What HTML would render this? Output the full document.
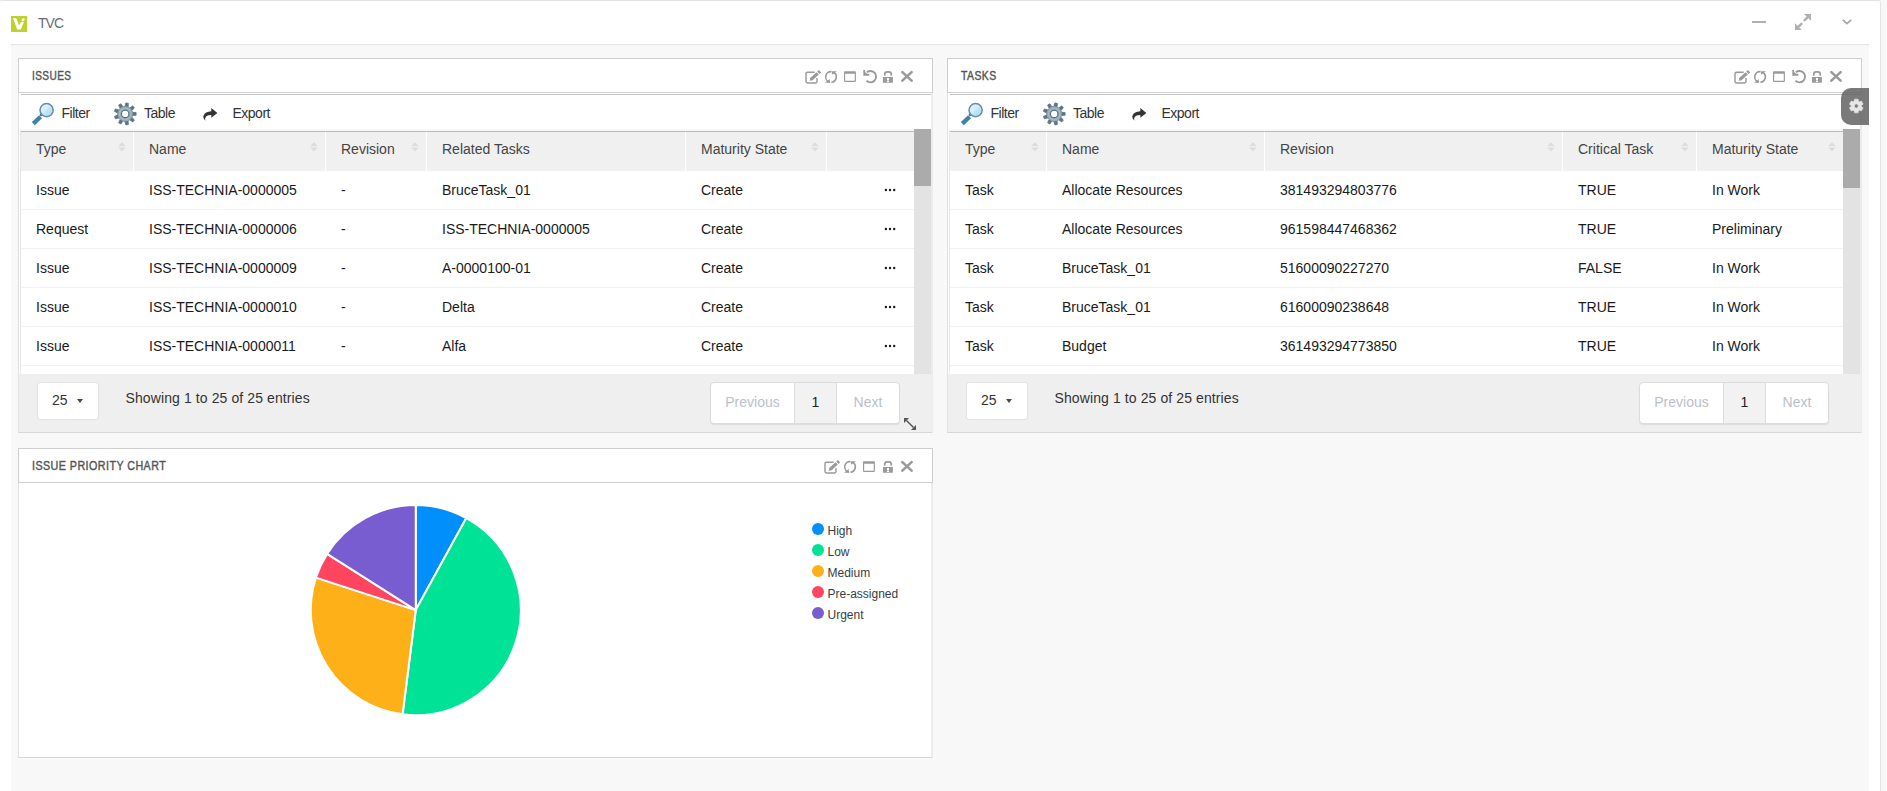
<!DOCTYPE html>
<html><head><meta charset="utf-8">
<style>
*{box-sizing:border-box;margin:0;padding:0}
html,body{width:1887px;height:791px;overflow:hidden}
body{background:#f8f8f8;font-family:"Liberation Sans",sans-serif;position:relative;color:#222}
.abs{position:absolute}
.frame{position:absolute;left:0;top:0;width:1881px;height:800px;background:#fff;border-top:1px solid #e0e2e2;border-right:1px solid #e4e6e6;border-top-right-radius:3px;border-top-left-radius:2px}
.logo{left:11px;top:16px;width:16px;height:16px;background:#bfd12e}
.ttl{left:38px;top:14px;font-size:14px;line-height:18px;color:#6a6d72;letter-spacing:-0.95px}
.sep{left:11px;top:44px;width:1858px;height:1px;background:#e4e4e4}
.content{left:11px;top:45px;width:1858px;height:760px;background:#f8f8f8}
/* widget */
.wh{height:35px;width:915px;border:1px solid #cfcfcf;background:#fff}
.wt{position:absolute;left:13px;top:10px;font-size:12px;line-height:14px;font-weight:normal;-webkit-text-stroke:0.4px #555;color:#555;letter-spacing:0.5px;transform-origin:0 0}
.wb{width:915px;background:#fff;border-left:1px solid #e2e2e2;border-right:2px solid #ececec;border-bottom:1px solid #d8d8d8}
.tbarline{height:1px;background:#c0c2c4}
.tb{font-size:14px;color:#333;line-height:16px;letter-spacing:-0.5px}
.th{background:#f0f0f0;height:38px;border-top:1px solid #b9bbbd}
.row{height:39px;border-bottom:1px solid #f0f0f0;background:#fff}
.cell{position:absolute;top:0;font-size:14px;white-space:nowrap}
.th .cell{line-height:36px;color:#444}
.row .cell{line-height:40px;color:#1a1a1a}
.div{position:absolute;top:-3px;width:1px;height:41px;background:#fff}
.sort{position:absolute;top:10px;width:8px;height:10px}
.foot{background:#efefef}
.sel{width:62px;height:38px;background:#fff;border:1px solid #e2e2e2;border-radius:3px}
.sel span{position:absolute;left:14px;top:9px;font-size:14px;line-height:16px;color:#333}
.caret{position:absolute;left:39px;top:16px;width:0;height:0;border-left:3.5px solid transparent;border-right:3.5px solid transparent;border-top:4px solid #4a4a4a}
.info{font-size:14px;line-height:16px;color:#333;letter-spacing:0.1px}
.pag{height:42px;background:#fff;border:1px solid #dcdcdc;border-radius:4px;box-shadow:0 1px 1px rgba(0,0,0,0.08)}
.pag div{position:absolute;top:0;height:40px;font-size:14px;line-height:38px;color:#bcc0c8;text-align:center}
.scr{background:#e3e3e3}
.thumb{background:#ababab}
.ic{position:absolute;fill:#9a9a9a}
</style></head><body>
<div class="frame"></div>
<div class="abs logo"><svg width="16" height="16" viewBox="0 0 16 16"><path d="M2.1 2.3 L5.3 2.3 L8 9.3 L10.1 5.9 L12.9 5.9 L9.8 13.5 L6.2 13.5 Z" fill="#fff"/><ellipse cx="12.1" cy="3.7" rx="1.8" ry="1.25" transform="rotate(-35 12.1 3.7)" fill="#fff"/></svg></div>
<div class="abs ttl">TVC</div>
<div class="abs sep"></div>
<div class="abs content"></div>

<!-- top right icons -->
<div class="abs" style="left:1752px;top:21px;width:14px;height:2px;background:#aeb0b4"></div>
<svg class="abs" style="left:1795px;top:14px" width="16" height="16" viewBox="0 0 16 16"><g fill="#aeb0b4"><path d="M9.1 0 L16 0 L16 6.8 Z"/><path d="M0 9.2 L0 16 L6.8 16 Z"/></g><g stroke="#aeb0b4" stroke-width="2.4" stroke-linecap="round"><path d="M9.6 6.2 L13 2.8"/><path d="M6.4 9.8 L3 13.2"/></g></svg>
<svg class="abs" style="left:1842px;top:19px" width="10" height="6" viewBox="0 0 10 6"><path d="M0.8 0.8 L5 4.6 L9.2 0.8" stroke="#a4a7ab" stroke-width="1.8" fill="none"/></svg>

<div class="abs wh" style="left:18px;top:58px"><div class="wt" style="left:13.2px;transform:scaleX(0.84)">ISSUES</div></div><svg class="abs" style="left:900px;top:66px" width="14" height="18" viewBox="0 0 14 18"><path d="M2.35 6.1 L11.6 14.6 M11.6 6.1 L2.35 14.6" stroke="#9a9a9a" stroke-width="2.6" stroke-linecap="round"/></svg><svg class="abs" style="left:882px;top:66px" width="12" height="18" viewBox="0 0 12 18"><path d="M2.7 9.7 V8.4 Q2.7 5.8 5.3 5.8 H6.7 Q9.3 5.8 9.3 8.4 V9.7" fill="none" stroke="#9a9a9a" stroke-width="1.7"/><path d="M0.95 11.1 H10.9 V16.7 H0.95 Z M5 12 V14.4 H7 V12 Z M5 14.9 V15.9 H7 V14.9 Z" fill="#9a9a9a" fill-rule="evenodd"/></svg><svg class="abs" style="left:862px;top:66px" width="16" height="18" viewBox="0 0 16 18"><path d="M4.8 6.2 A5.7 5.7 0 1 1 4.5 14.8" fill="none" stroke="#9a9a9a" stroke-width="1.9"/><path d="M1.3 4.05 H3.1 V5.9 L5.1 7.85 H7.4 V9.75 H1.3 Z" fill="#9a9a9a"/></svg><svg class="abs" style="left:843px;top:70px" width="14" height="13" viewBox="0 0 14 13"><path d="M1.8 1.2 H12.1 Q12.9 1.2 12.9 2 V11.1 Q12.9 11.9 12.1 11.9 H1.8 Q1 11.9 1 11.1 V2 Q1 1.2 1.8 1.2 Z M2.15 3.7 V10.75 H11.75 V3.7 Z" fill="#9a9a9a" fill-rule="evenodd"/></svg><svg class="abs" style="left:824px;top:70px" width="14" height="14" viewBox="0 0 14 14"><g fill="none" stroke="#9a9a9a" stroke-width="1.6"><path d="M7.55 1.63 A5.3 5.3 0 0 0 6.08 12.12"/><path d="M9.49 2.22 A5.3 5.3 0 0 1 7.37 12.19"/></g><g fill="#9a9a9a"><path d="M1.0 12.7 L5.75 12.7 L5.75 9.0 Z"/><path d="M7.95 1.15 L13 1.15 L7.95 4.65 Z"/></g></svg><svg class="abs" style="left:804px;top:66px" width="20" height="20" viewBox="0 0 20 20"><path d="M10.7 6.3 H3.4 Q2 6.3 2 7.7 V15.5 Q2 16.9 3.4 16.9 H11.6 Q13 16.9 13 15.5 V12.1" fill="none" stroke="#9a9a9a" stroke-width="1.45"/><path d="M5.6 14.8 L6.39 11.83 L12.57 6.13 L14.81 8.55 L8.63 14.25 Z" fill="#9a9a9a"/><path d="M13.23 5.52 L14.88 3.99 L17.12 6.41 L15.47 7.94 Z" fill="#9a9a9a"/></svg><div class="abs wb" style="left:18px;top:93px;height:340px"></div><div class="abs tbarline" style="left:21px;top:94px;width:910px"></div><svg class="abs" style="left:28px;top:98px" width="30" height="30" viewBox="0 0 30 30"><defs><linearGradient id="lg28" x1="0" y1="0" x2="1" y2="1"><stop offset="0" stop-color="#e3f3fb"/><stop offset="0.5" stop-color="#d0ecf9"/><stop offset="0.52" stop-color="#bfe4f7"/><stop offset="1" stop-color="#aedcf5"/></linearGradient></defs><path d="M12.2 17.6 L13.8 16.2" stroke="#4b6675" stroke-width="2.2"/><path d="M5.3 25.6 L12.6 18.8" stroke="#3d83a8" stroke-width="4.3"/><circle cx="18.6" cy="12.1" r="6.6" fill="url(#lg28)" stroke="#668ea3" stroke-width="1.5"/></svg><div class="abs tb" style="left:61.5px;top:105px">Filter</div><svg class="abs" style="left:110px;top:98px" width="30" height="30" viewBox="0 0 30 30"><path d="M14.86 8.51 L15.80 4.92 L18.39 5.37 L18.04 9.07 L19.69 10.02 L22.72 7.87 L24.41 9.89 L21.77 12.50 L22.42 14.29 L26.12 14.58 L26.12 17.22 L22.42 17.51 L21.77 19.30 L24.41 21.91 L22.72 23.93 L19.69 21.78 L18.04 22.73 L18.39 26.43 L15.80 26.88 L14.86 23.29 L12.99 22.96 L10.88 26.02 L8.60 24.70 L10.19 21.35 L8.97 19.89 L5.39 20.87 L4.49 18.40 L7.86 16.85 L7.86 14.95 L4.49 13.40 L5.39 10.93 L8.97 11.91 L10.19 10.45 L8.60 7.10 L10.88 5.78 L12.99 8.84 Z" fill="#5a7686" stroke="#5a7686" stroke-width="0.8" stroke-linejoin="round"/><circle cx="15.2" cy="15.9" r="7.6" fill="#8fa4b0"/><circle cx="15.2" cy="15.9" r="5.7" fill="none" stroke="#a6b8c2" stroke-width="1.6"/><circle cx="15.2" cy="15.9" r="3.7" fill="#fff" stroke="#54707f" stroke-width="1.1"/></svg><div class="abs tb" style="left:144px;top:105px">Table</div><svg class="abs" style="left:203px;top:108px" width="15" height="13" viewBox="0 0 15 13"><path d="M8.3 0 L14.4 4.9 L8.3 9.8 V7 Q3.2 6.9 2.2 10.3 Q1.8 11.6 2.8 12.7 Q-0.6 10.8 0.6 7.4 Q2 3.6 8.3 3.2 Z" fill="#333"/></svg><div class="abs tb" style="left:232.5px;top:105px">Export</div><div class="abs" style="left:20px;top:131px;width:894px;height:243px;background:#fff;overflow:hidden"><div class="abs th" style="left:0;top:0;width:894px;height:40px"></div><div class="cell" style="left:16px;top:0px;line-height:36px;color:#444">Type</div><div class="cell" style="left:129px;top:0px;line-height:36px;color:#444">Name</div><div class="abs" style="left:113px;top:1px;width:1px;height:39px;background:#fff"></div><div class="cell" style="left:321px;top:0px;line-height:36px;color:#444">Revision</div><div class="abs" style="left:305px;top:1px;width:1px;height:39px;background:#fff"></div><div class="cell" style="left:422px;top:0px;line-height:36px;color:#444">Related Tasks</div><div class="abs" style="left:406px;top:1px;width:1px;height:39px;background:#fff"></div><div class="cell" style="left:681px;top:0px;line-height:36px;color:#444">Maturity State</div><div class="abs" style="left:665px;top:1px;width:1px;height:39px;background:#fff"></div><div class="abs" style="left:806px;top:1px;width:1px;height:39px;background:#fff"></div><svg class="abs" style="left:98px;top:11px" width="8" height="10" viewBox="0 0 8 10"><path d="M3.9 0.2 L7.6 4.0 H0.2 Z M3.9 9.4 L7.6 5.4 H0.2 Z" fill="#dcdcdc"/></svg><svg class="abs" style="left:290px;top:11px" width="8" height="10" viewBox="0 0 8 10"><path d="M3.9 0.2 L7.6 4.0 H0.2 Z M3.9 9.4 L7.6 5.4 H0.2 Z" fill="#dcdcdc"/></svg><svg class="abs" style="left:391px;top:11px" width="8" height="10" viewBox="0 0 8 10"><path d="M3.9 0.2 L7.6 4.0 H0.2 Z M3.9 9.4 L7.6 5.4 H0.2 Z" fill="#dcdcdc"/></svg><svg class="abs" style="left:791px;top:11px" width="8" height="10" viewBox="0 0 8 10"><path d="M3.9 0.2 L7.6 4.0 H0.2 Z M3.9 9.4 L7.6 5.4 H0.2 Z" fill="#dcdcdc"/></svg><div class="abs" style="left:0;top:78px;width:894px;height:1px;background:#f1f1f1"></div><div class="cell" style="left:16px;top:40px;line-height:38px;color:#1a1a1a">Issue</div><div class="cell" style="left:129px;top:40px;line-height:38px;color:#1a1a1a">ISS-TECHNIA-0000005</div><div class="cell" style="left:321px;top:40px;line-height:38px;color:#1a1a1a">-</div><div class="cell" style="left:422px;top:40px;line-height:38px;color:#1a1a1a">BruceTask_01</div><div class="cell" style="left:681px;top:40px;line-height:38px;color:#1a1a1a">Create</div><svg class="abs" style="left:864px;top:56.8px" width="12" height="4" viewBox="0 0 12 4"><g fill="#1a1a1a"><circle cx="1.9" cy="2" r="1.2"/><circle cx="6" cy="2" r="1.2"/><circle cx="10.2" cy="2" r="1.2"/></g></svg><div class="abs" style="left:0;top:117px;width:894px;height:1px;background:#f1f1f1"></div><div class="cell" style="left:16px;top:79px;line-height:38px;color:#1a1a1a">Request</div><div class="cell" style="left:129px;top:79px;line-height:38px;color:#1a1a1a">ISS-TECHNIA-0000006</div><div class="cell" style="left:321px;top:79px;line-height:38px;color:#1a1a1a">-</div><div class="cell" style="left:422px;top:79px;line-height:38px;color:#1a1a1a">ISS-TECHNIA-0000005</div><div class="cell" style="left:681px;top:79px;line-height:38px;color:#1a1a1a">Create</div><svg class="abs" style="left:864px;top:95.8px" width="12" height="4" viewBox="0 0 12 4"><g fill="#1a1a1a"><circle cx="1.9" cy="2" r="1.2"/><circle cx="6" cy="2" r="1.2"/><circle cx="10.2" cy="2" r="1.2"/></g></svg><div class="abs" style="left:0;top:156px;width:894px;height:1px;background:#f1f1f1"></div><div class="cell" style="left:16px;top:118px;line-height:38px;color:#1a1a1a">Issue</div><div class="cell" style="left:129px;top:118px;line-height:38px;color:#1a1a1a">ISS-TECHNIA-0000009</div><div class="cell" style="left:321px;top:118px;line-height:38px;color:#1a1a1a">-</div><div class="cell" style="left:422px;top:118px;line-height:38px;color:#1a1a1a">A-0000100-01</div><div class="cell" style="left:681px;top:118px;line-height:38px;color:#1a1a1a">Create</div><svg class="abs" style="left:864px;top:134.8px" width="12" height="4" viewBox="0 0 12 4"><g fill="#1a1a1a"><circle cx="1.9" cy="2" r="1.2"/><circle cx="6" cy="2" r="1.2"/><circle cx="10.2" cy="2" r="1.2"/></g></svg><div class="abs" style="left:0;top:195px;width:894px;height:1px;background:#f1f1f1"></div><div class="cell" style="left:16px;top:157px;line-height:38px;color:#1a1a1a">Issue</div><div class="cell" style="left:129px;top:157px;line-height:38px;color:#1a1a1a">ISS-TECHNIA-0000010</div><div class="cell" style="left:321px;top:157px;line-height:38px;color:#1a1a1a">-</div><div class="cell" style="left:422px;top:157px;line-height:38px;color:#1a1a1a">Delta</div><div class="cell" style="left:681px;top:157px;line-height:38px;color:#1a1a1a">Create</div><svg class="abs" style="left:864px;top:173.8px" width="12" height="4" viewBox="0 0 12 4"><g fill="#1a1a1a"><circle cx="1.9" cy="2" r="1.2"/><circle cx="6" cy="2" r="1.2"/><circle cx="10.2" cy="2" r="1.2"/></g></svg><div class="abs" style="left:0;top:234px;width:894px;height:1px;background:#f1f1f1"></div><div class="cell" style="left:16px;top:196px;line-height:38px;color:#1a1a1a">Issue</div><div class="cell" style="left:129px;top:196px;line-height:38px;color:#1a1a1a">ISS-TECHNIA-0000011</div><div class="cell" style="left:321px;top:196px;line-height:38px;color:#1a1a1a">-</div><div class="cell" style="left:422px;top:196px;line-height:38px;color:#1a1a1a">Alfa</div><div class="cell" style="left:681px;top:196px;line-height:38px;color:#1a1a1a">Create</div><svg class="abs" style="left:864px;top:212.8px" width="12" height="4" viewBox="0 0 12 4"><g fill="#1a1a1a"><circle cx="1.9" cy="2" r="1.2"/><circle cx="6" cy="2" r="1.2"/><circle cx="10.2" cy="2" r="1.2"/></g></svg></div><div class="abs" style="left:20px;top:129px;width:894px;height:2px;background:linear-gradient(#fbfbfc,#f1f2f3)"></div><div class="abs" style="left:826px;top:129px;width:1px;height:2px;background:#fff"></div><div class="abs" style="left:133px;top:129px;width:1px;height:2px;background:#fff"></div><div class="abs" style="left:325px;top:129px;width:1px;height:2px;background:#fff"></div><div class="abs" style="left:426px;top:129px;width:1px;height:2px;background:#fff"></div><div class="abs" style="left:685px;top:129px;width:1px;height:2px;background:#fff"></div><div class="abs scr" style="left:914px;top:129px;width:17px;height:245px"></div><div class="abs thumb" style="left:914px;top:129px;width:17px;height:57px"></div><div class="abs" style="left:20px;top:131px;width:1px;height:243px;background:#e8e8e8"></div><div class="abs foot" style="left:19px;top:374px;width:913px;height:58px"></div><div class="abs sel" style="left:37px;top:382px"><span>25</span><div class="caret"></div></div><div class="abs info" style="left:125.5px;top:390px">Showing 1 to 25 of 25 entries</div><div class="abs pag" style="left:710px;top:382px;width:190px"><div style="left:0;width:83px">Previous</div><div style="left:83px;width:43px;background:#f2f2f2;border-left:1px solid #dcdcdc;border-right:1px solid #dcdcdc;color:#222">1</div><div style="left:126px;width:62px">Next</div></div><svg class="abs" style="left:904px;top:418px" width="12" height="12" viewBox="0 0 12 12"><g fill="#555"><path d="M0 0 H5 L0 5 Z"/><path d="M12 12 H7 L12 7 Z"/><path d="M2 3 L3 2 L10 9 L9 10 Z"/></g></svg><div class="abs wh" style="left:947px;top:58px"><div class="wt" style="left:13.2px;transform:scaleX(0.87)">TASKS</div></div><svg class="abs" style="left:1829px;top:66px" width="14" height="18" viewBox="0 0 14 18"><path d="M2.35 6.1 L11.6 14.6 M11.6 6.1 L2.35 14.6" stroke="#9a9a9a" stroke-width="2.6" stroke-linecap="round"/></svg><svg class="abs" style="left:1811px;top:66px" width="12" height="18" viewBox="0 0 12 18"><path d="M2.7 9.7 V8.4 Q2.7 5.8 5.3 5.8 H6.7 Q9.3 5.8 9.3 8.4 V9.7" fill="none" stroke="#9a9a9a" stroke-width="1.7"/><path d="M0.95 11.1 H10.9 V16.7 H0.95 Z M5 12 V14.4 H7 V12 Z M5 14.9 V15.9 H7 V14.9 Z" fill="#9a9a9a" fill-rule="evenodd"/></svg><svg class="abs" style="left:1791px;top:66px" width="16" height="18" viewBox="0 0 16 18"><path d="M4.8 6.2 A5.7 5.7 0 1 1 4.5 14.8" fill="none" stroke="#9a9a9a" stroke-width="1.9"/><path d="M1.3 4.05 H3.1 V5.9 L5.1 7.85 H7.4 V9.75 H1.3 Z" fill="#9a9a9a"/></svg><svg class="abs" style="left:1772px;top:70px" width="14" height="13" viewBox="0 0 14 13"><path d="M1.8 1.2 H12.1 Q12.9 1.2 12.9 2 V11.1 Q12.9 11.9 12.1 11.9 H1.8 Q1 11.9 1 11.1 V2 Q1 1.2 1.8 1.2 Z M2.15 3.7 V10.75 H11.75 V3.7 Z" fill="#9a9a9a" fill-rule="evenodd"/></svg><svg class="abs" style="left:1753px;top:70px" width="14" height="14" viewBox="0 0 14 14"><g fill="none" stroke="#9a9a9a" stroke-width="1.6"><path d="M7.55 1.63 A5.3 5.3 0 0 0 6.08 12.12"/><path d="M9.49 2.22 A5.3 5.3 0 0 1 7.37 12.19"/></g><g fill="#9a9a9a"><path d="M1.0 12.7 L5.75 12.7 L5.75 9.0 Z"/><path d="M7.95 1.15 L13 1.15 L7.95 4.65 Z"/></g></svg><svg class="abs" style="left:1733px;top:66px" width="20" height="20" viewBox="0 0 20 20"><path d="M10.7 6.3 H3.4 Q2 6.3 2 7.7 V15.5 Q2 16.9 3.4 16.9 H11.6 Q13 16.9 13 15.5 V12.1" fill="none" stroke="#9a9a9a" stroke-width="1.45"/><path d="M5.6 14.8 L6.39 11.83 L12.57 6.13 L14.81 8.55 L8.63 14.25 Z" fill="#9a9a9a"/><path d="M13.23 5.52 L14.88 3.99 L17.12 6.41 L15.47 7.94 Z" fill="#9a9a9a"/></svg><div class="abs wb" style="left:947px;top:93px;height:340px"></div><div class="abs tbarline" style="left:950px;top:94px;width:910px"></div><svg class="abs" style="left:957px;top:98px" width="30" height="30" viewBox="0 0 30 30"><defs><linearGradient id="lg957" x1="0" y1="0" x2="1" y2="1"><stop offset="0" stop-color="#e3f3fb"/><stop offset="0.5" stop-color="#d0ecf9"/><stop offset="0.52" stop-color="#bfe4f7"/><stop offset="1" stop-color="#aedcf5"/></linearGradient></defs><path d="M12.2 17.6 L13.8 16.2" stroke="#4b6675" stroke-width="2.2"/><path d="M5.3 25.6 L12.6 18.8" stroke="#3d83a8" stroke-width="4.3"/><circle cx="18.6" cy="12.1" r="6.6" fill="url(#lg957)" stroke="#668ea3" stroke-width="1.5"/></svg><div class="abs tb" style="left:990.5px;top:105px">Filter</div><svg class="abs" style="left:1039px;top:98px" width="30" height="30" viewBox="0 0 30 30"><path d="M14.86 8.51 L15.80 4.92 L18.39 5.37 L18.04 9.07 L19.69 10.02 L22.72 7.87 L24.41 9.89 L21.77 12.50 L22.42 14.29 L26.12 14.58 L26.12 17.22 L22.42 17.51 L21.77 19.30 L24.41 21.91 L22.72 23.93 L19.69 21.78 L18.04 22.73 L18.39 26.43 L15.80 26.88 L14.86 23.29 L12.99 22.96 L10.88 26.02 L8.60 24.70 L10.19 21.35 L8.97 19.89 L5.39 20.87 L4.49 18.40 L7.86 16.85 L7.86 14.95 L4.49 13.40 L5.39 10.93 L8.97 11.91 L10.19 10.45 L8.60 7.10 L10.88 5.78 L12.99 8.84 Z" fill="#5a7686" stroke="#5a7686" stroke-width="0.8" stroke-linejoin="round"/><circle cx="15.2" cy="15.9" r="7.6" fill="#8fa4b0"/><circle cx="15.2" cy="15.9" r="5.7" fill="none" stroke="#a6b8c2" stroke-width="1.6"/><circle cx="15.2" cy="15.9" r="3.7" fill="#fff" stroke="#54707f" stroke-width="1.1"/></svg><div class="abs tb" style="left:1073px;top:105px">Table</div><svg class="abs" style="left:1132px;top:108px" width="15" height="13" viewBox="0 0 15 13"><path d="M8.3 0 L14.4 4.9 L8.3 9.8 V7 Q3.2 6.9 2.2 10.3 Q1.8 11.6 2.8 12.7 Q-0.6 10.8 0.6 7.4 Q2 3.6 8.3 3.2 Z" fill="#333"/></svg><div class="abs tb" style="left:1161.5px;top:105px">Export</div><div class="abs" style="left:949px;top:131px;width:894px;height:243px;background:#fff;overflow:hidden"><div class="abs th" style="left:0;top:0;width:894px;height:40px"></div><div class="cell" style="left:16px;top:0px;line-height:36px;color:#444">Type</div><div class="cell" style="left:113px;top:0px;line-height:36px;color:#444">Name</div><div class="abs" style="left:97px;top:1px;width:1px;height:39px;background:#fff"></div><div class="cell" style="left:331px;top:0px;line-height:36px;color:#444">Revision</div><div class="abs" style="left:315px;top:1px;width:1px;height:39px;background:#fff"></div><div class="cell" style="left:629px;top:0px;line-height:36px;color:#444">Critical Task</div><div class="abs" style="left:613px;top:1px;width:1px;height:39px;background:#fff"></div><div class="cell" style="left:763px;top:0px;line-height:36px;color:#444">Maturity State</div><div class="abs" style="left:747px;top:1px;width:1px;height:39px;background:#fff"></div><svg class="abs" style="left:82px;top:11px" width="8" height="10" viewBox="0 0 8 10"><path d="M3.9 0.2 L7.6 4.0 H0.2 Z M3.9 9.4 L7.6 5.4 H0.2 Z" fill="#dcdcdc"/></svg><svg class="abs" style="left:300px;top:11px" width="8" height="10" viewBox="0 0 8 10"><path d="M3.9 0.2 L7.6 4.0 H0.2 Z M3.9 9.4 L7.6 5.4 H0.2 Z" fill="#dcdcdc"/></svg><svg class="abs" style="left:598px;top:11px" width="8" height="10" viewBox="0 0 8 10"><path d="M3.9 0.2 L7.6 4.0 H0.2 Z M3.9 9.4 L7.6 5.4 H0.2 Z" fill="#dcdcdc"/></svg><svg class="abs" style="left:732px;top:11px" width="8" height="10" viewBox="0 0 8 10"><path d="M3.9 0.2 L7.6 4.0 H0.2 Z M3.9 9.4 L7.6 5.4 H0.2 Z" fill="#dcdcdc"/></svg><svg class="abs" style="left:879px;top:11px" width="8" height="10" viewBox="0 0 8 10"><path d="M3.9 0.2 L7.6 4.0 H0.2 Z M3.9 9.4 L7.6 5.4 H0.2 Z" fill="#dcdcdc"/></svg><div class="abs" style="left:0;top:78px;width:894px;height:1px;background:#f1f1f1"></div><div class="cell" style="left:16px;top:40px;line-height:38px;color:#1a1a1a">Task</div><div class="cell" style="left:113px;top:40px;line-height:38px;color:#1a1a1a">Allocate Resources</div><div class="cell" style="left:331px;top:40px;line-height:38px;color:#1a1a1a">381493294803776</div><div class="cell" style="left:629px;top:40px;line-height:38px;color:#1a1a1a">TRUE</div><div class="cell" style="left:763px;top:40px;line-height:38px;color:#1a1a1a">In Work</div><div class="abs" style="left:0;top:117px;width:894px;height:1px;background:#f1f1f1"></div><div class="cell" style="left:16px;top:79px;line-height:38px;color:#1a1a1a">Task</div><div class="cell" style="left:113px;top:79px;line-height:38px;color:#1a1a1a">Allocate Resources</div><div class="cell" style="left:331px;top:79px;line-height:38px;color:#1a1a1a">961598447468362</div><div class="cell" style="left:629px;top:79px;line-height:38px;color:#1a1a1a">TRUE</div><div class="cell" style="left:763px;top:79px;line-height:38px;color:#1a1a1a">Preliminary</div><div class="abs" style="left:0;top:156px;width:894px;height:1px;background:#f1f1f1"></div><div class="cell" style="left:16px;top:118px;line-height:38px;color:#1a1a1a">Task</div><div class="cell" style="left:113px;top:118px;line-height:38px;color:#1a1a1a">BruceTask_01</div><div class="cell" style="left:331px;top:118px;line-height:38px;color:#1a1a1a">51600090227270</div><div class="cell" style="left:629px;top:118px;line-height:38px;color:#1a1a1a">FALSE</div><div class="cell" style="left:763px;top:118px;line-height:38px;color:#1a1a1a">In Work</div><div class="abs" style="left:0;top:195px;width:894px;height:1px;background:#f1f1f1"></div><div class="cell" style="left:16px;top:157px;line-height:38px;color:#1a1a1a">Task</div><div class="cell" style="left:113px;top:157px;line-height:38px;color:#1a1a1a">BruceTask_01</div><div class="cell" style="left:331px;top:157px;line-height:38px;color:#1a1a1a">61600090238648</div><div class="cell" style="left:629px;top:157px;line-height:38px;color:#1a1a1a">TRUE</div><div class="cell" style="left:763px;top:157px;line-height:38px;color:#1a1a1a">In Work</div><div class="abs" style="left:0;top:234px;width:894px;height:1px;background:#f1f1f1"></div><div class="cell" style="left:16px;top:196px;line-height:38px;color:#1a1a1a">Task</div><div class="cell" style="left:113px;top:196px;line-height:38px;color:#1a1a1a">Budget</div><div class="cell" style="left:331px;top:196px;line-height:38px;color:#1a1a1a">361493294773850</div><div class="cell" style="left:629px;top:196px;line-height:38px;color:#1a1a1a">TRUE</div><div class="cell" style="left:763px;top:196px;line-height:38px;color:#1a1a1a">In Work</div></div><div class="abs" style="left:949px;top:129px;width:894px;height:2px;background:linear-gradient(#fbfbfc,#f1f2f3)"></div><div class="abs" style="left:1046px;top:129px;width:1px;height:2px;background:#fff"></div><div class="abs" style="left:1264px;top:129px;width:1px;height:2px;background:#fff"></div><div class="abs" style="left:1562px;top:129px;width:1px;height:2px;background:#fff"></div><div class="abs" style="left:1696px;top:129px;width:1px;height:2px;background:#fff"></div><div class="abs scr" style="left:1843px;top:129px;width:17px;height:245px"></div><div class="abs thumb" style="left:1843px;top:129px;width:17px;height:59px"></div><div class="abs" style="left:949px;top:131px;width:1px;height:243px;background:#e8e8e8"></div><div class="abs foot" style="left:948px;top:374px;width:913px;height:58px"></div><div class="abs sel" style="left:966px;top:382px"><span>25</span><div class="caret"></div></div><div class="abs info" style="left:1054.5px;top:390px">Showing 1 to 25 of 25 entries</div><div class="abs pag" style="left:1639px;top:382px;width:190px"><div style="left:0;width:83px">Previous</div><div style="left:83px;width:43px;background:#f2f2f2;border-left:1px solid #dcdcdc;border-right:1px solid #dcdcdc;color:#222">1</div><div style="left:126px;width:62px">Next</div></div><div class="abs wh" style="left:18px;top:448px"><div class="wt" style="left:13.3px;transform:scaleX(0.893)">ISSUE PRIORITY CHART</div></div><svg class="abs" style="left:900px;top:456px" width="14" height="18" viewBox="0 0 14 18"><path d="M2.35 6.1 L11.6 14.6 M11.6 6.1 L2.35 14.6" stroke="#9a9a9a" stroke-width="2.6" stroke-linecap="round"/></svg><svg class="abs" style="left:882px;top:456px" width="12" height="18" viewBox="0 0 12 18"><path d="M2.7 9.7 V8.4 Q2.7 5.8 5.3 5.8 H6.7 Q9.3 5.8 9.3 8.4 V9.7" fill="none" stroke="#9a9a9a" stroke-width="1.7"/><path d="M0.95 11.1 H10.9 V16.7 H0.95 Z M5 12 V14.4 H7 V12 Z M5 14.9 V15.9 H7 V14.9 Z" fill="#9a9a9a" fill-rule="evenodd"/></svg><svg class="abs" style="left:862px;top:460px" width="14" height="13" viewBox="0 0 14 13"><path d="M1.8 1.2 H12.1 Q12.9 1.2 12.9 2 V11.1 Q12.9 11.9 12.1 11.9 H1.8 Q1 11.9 1 11.1 V2 Q1 1.2 1.8 1.2 Z M2.15 3.7 V10.75 H11.75 V3.7 Z" fill="#9a9a9a" fill-rule="evenodd"/></svg><svg class="abs" style="left:843px;top:460px" width="14" height="14" viewBox="0 0 14 14"><g fill="none" stroke="#9a9a9a" stroke-width="1.6"><path d="M7.55 1.63 A5.3 5.3 0 0 0 6.08 12.12"/><path d="M9.49 2.22 A5.3 5.3 0 0 1 7.37 12.19"/></g><g fill="#9a9a9a"><path d="M1.0 12.7 L5.75 12.7 L5.75 9.0 Z"/><path d="M7.95 1.15 L13 1.15 L7.95 4.65 Z"/></g></svg><svg class="abs" style="left:823px;top:456px" width="20" height="20" viewBox="0 0 20 20"><path d="M10.7 6.3 H3.4 Q2 6.3 2 7.7 V15.5 Q2 16.9 3.4 16.9 H11.6 Q13 16.9 13 15.5 V12.1" fill="none" stroke="#9a9a9a" stroke-width="1.45"/><path d="M5.6 14.8 L6.39 11.83 L12.57 6.13 L14.81 8.55 L8.63 14.25 Z" fill="#9a9a9a"/><path d="M13.23 5.52 L14.88 3.99 L17.12 6.41 L15.47 7.94 Z" fill="#9a9a9a"/></svg><div class="abs wb" style="left:18px;top:483px;height:275px"></div><svg class="abs" style="left:0;top:0" width="1887" height="791"><path d="M415.75 610.1 L415.75 505.10 A105 105 0 0 1 466.33 518.09 Z" fill="#008ffb" stroke="#fff" stroke-width="2" stroke-linejoin="round"/><path d="M415.75 610.1 L466.33 518.09 A105 105 0 0 1 402.59 714.27 Z" fill="#00e396" stroke="#fff" stroke-width="2" stroke-linejoin="round"/><path d="M415.75 610.1 L402.59 714.27 A105 105 0 0 1 315.89 577.65 Z" fill="#feb019" stroke="#fff" stroke-width="2" stroke-linejoin="round"/><path d="M415.75 610.1 L315.89 577.65 A105 105 0 0 1 327.10 553.84 Z" fill="#ff4560" stroke="#fff" stroke-width="2" stroke-linejoin="round"/><path d="M415.75 610.1 L327.10 553.84 A105 105 0 0 1 415.75 505.10 Z" fill="#775dd0" stroke="#fff" stroke-width="2" stroke-linejoin="round"/></svg><div class="abs" style="left:812px;top:523px;width:12px;height:12px;border-radius:6px;background:#008ffb"></div><div class="abs" style="left:827.5px;top:523.7px;font-size:12px;line-height:14px;color:#373d3f">High</div><div class="abs" style="left:812px;top:544px;width:12px;height:12px;border-radius:6px;background:#00e396"></div><div class="abs" style="left:827.5px;top:544.7px;font-size:12px;line-height:14px;color:#373d3f">Low</div><div class="abs" style="left:812px;top:565px;width:12px;height:12px;border-radius:6px;background:#feb019"></div><div class="abs" style="left:827.5px;top:565.7px;font-size:12px;line-height:14px;color:#373d3f">Medium</div><div class="abs" style="left:812px;top:586px;width:12px;height:12px;border-radius:6px;background:#ff4560"></div><div class="abs" style="left:827.5px;top:586.7px;font-size:12px;line-height:14px;color:#373d3f">Pre-assigned</div><div class="abs" style="left:812px;top:607px;width:12px;height:12px;border-radius:6px;background:#775dd0"></div><div class="abs" style="left:827.5px;top:607.7px;font-size:12px;line-height:14px;color:#373d3f">Urgent</div><div class="abs" style="left:1841px;top:88px;width:28px;height:37px;background:rgba(96,96,96,0.84);border-radius:10px 0 0 10px"></div><svg class="abs" style="left:1848px;top:98px" width="16" height="16" viewBox="0 0 16 16"><path d="M6.29 3.10 L6.47 1.14 L10.13 1.14 L10.31 3.10 L11.54 3.80 L13.33 2.99 L15.15 6.15 L13.55 7.29 L13.55 8.71 L15.15 9.85 L13.33 13.01 L11.54 12.20 L10.31 12.90 L10.13 14.86 L6.47 14.86 L6.29 12.90 L5.06 12.20 L3.27 13.01 L1.45 9.85 L3.05 8.71 L3.05 7.29 L1.45 6.15 L3.27 2.99 L5.06 3.80 Z M10.3 8 A2.0 2.0 0 1 0 6.300000000000001 8 A2.0 2.0 0 1 0 10.3 8 Z" fill="#e6e6e6" fill-rule="evenodd" stroke="#e6e6e6" stroke-width="0.6" stroke-linejoin="round"/></svg>
</body></html>
